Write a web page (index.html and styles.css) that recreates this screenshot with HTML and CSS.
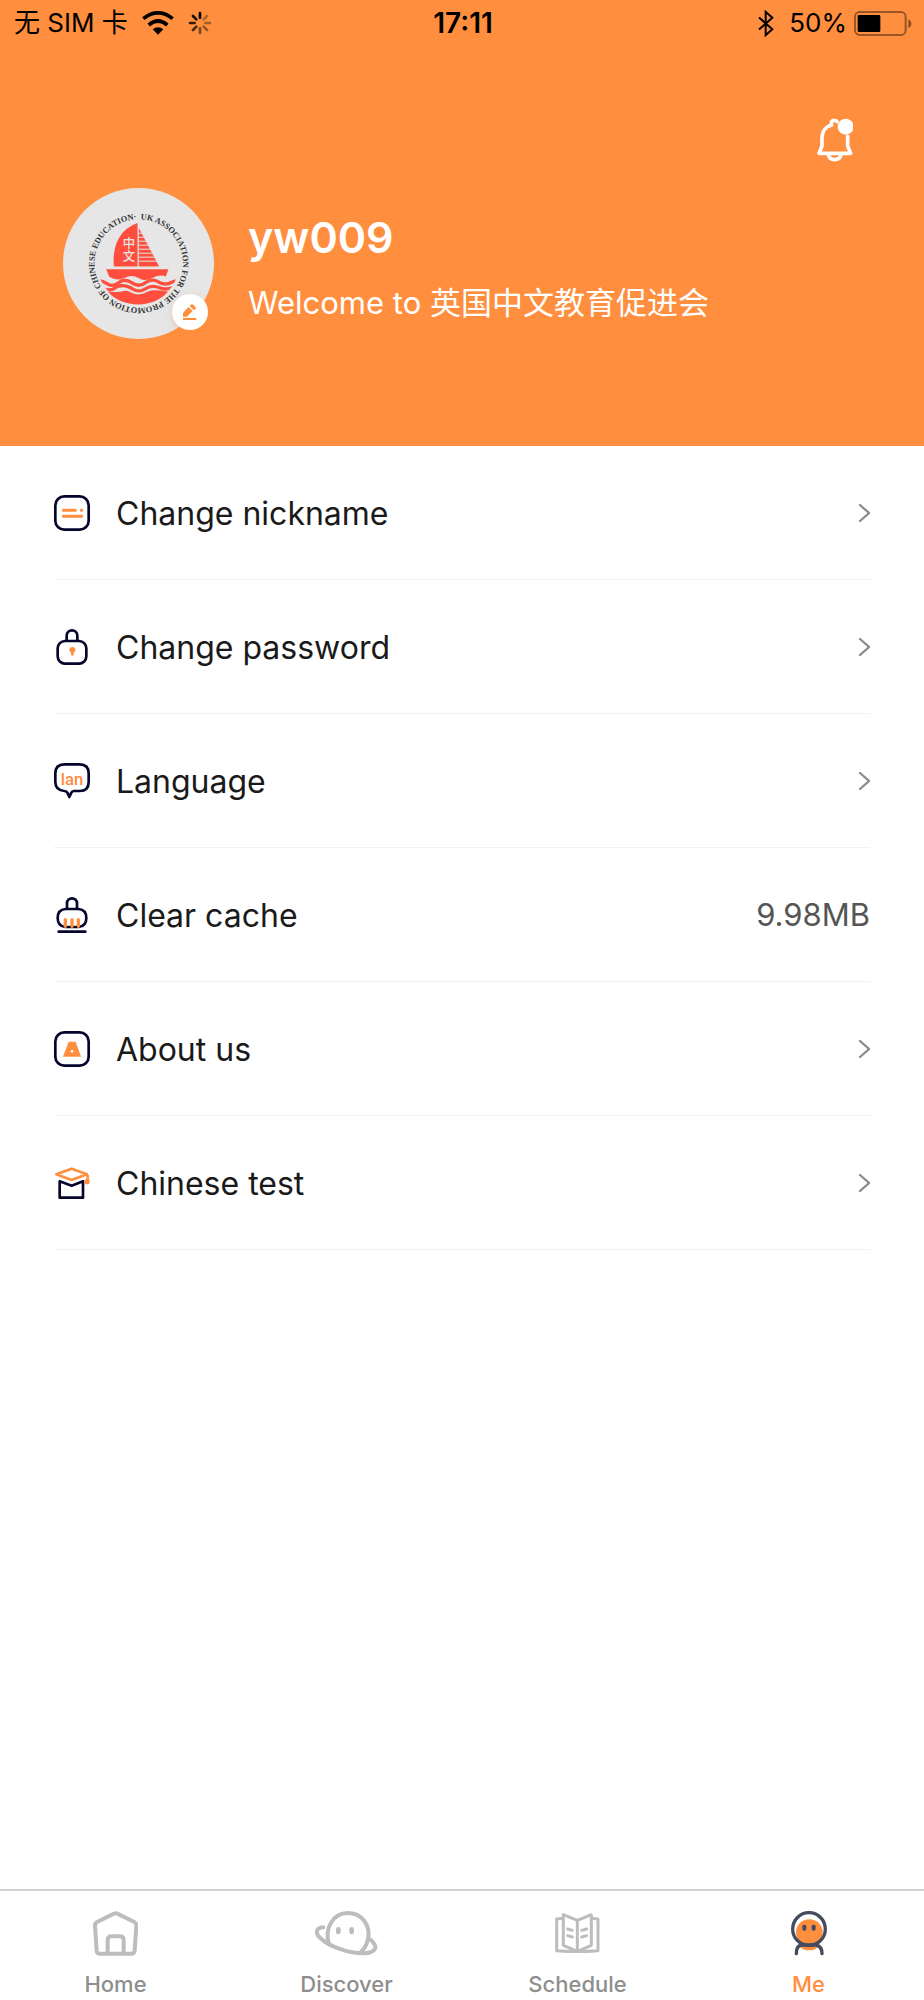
FILE: index.html
```html
<!DOCTYPE html>
<html lang="en">
<head>
    <meta charset="UTF-8">
    <meta name="viewport" content="width=device-width, initial-scale=1.0">
    <title>Me</title>
    <link rel="stylesheet" href="styles.css">
</head>
<body>

    <header class="header">
        <!-- Status bar -->
        <div class="status-bar">
            <div class="status-left">
                <span>无 SIM 卡</span>
                <svg class="wifi" viewBox="0 0 96 72">
                    <g fill="none" stroke="#000" stroke-width="11">
                        <path d="M4 23Q48-12 92 23"/>
                        <path d="M20 42Q48 18 76 42"/>
                    </g>
                    <path d="M32 55Q48 42 64 55L48 71Z"/>
                </svg>
                <svg class="spinner" viewBox="-36 -36 72 72">
                    <g stroke="#000" stroke-width="8" stroke-linecap="round">
                        <path d="M0-16V-30"/>
                        <path d="M11-11L21-21" opacity=".3"/>
                        <path d="M16 0H30" opacity=".35"/>
                        <path d="M11 11L21 21" opacity=".4"/>
                        <path d="M0 16V30" opacity=".5"/>
                        <path d="M-11 11L-21 21" opacity=".7"/>
                        <path d="M-16 0H-30" opacity=".8"/>
                        <path d="M-11-11L-21-21" opacity=".9"/>
                    </g>
                </svg>
            </div>
            <time class="clock">17:11</time>
            <div class="status-right">
                <svg class="bluetooth" viewBox="0 0 48 80">
                    <path d="M3 22L43 57L23 75V5L43 23L3 58" fill="none" stroke="#000" stroke-width="6"/>
                </svg>
                <span>50%</span>
                <svg class="battery" viewBox="0 0 174 75">
                    <rect x="3" y="3" width="152" height="69" rx="14" fill="none" stroke="#000" stroke-opacity=".4" stroke-width="6"/>
                    <rect x="11" y="12" width="68" height="51" rx="4"/>
                    <path d="M163 25Q172 29 172 38T163 51Z" opacity=".45"/>
                </svg>
            </div>
        </div>

        <div class="toolbar">
            <button class="bell" type="button" aria-label="Notifications">
                <svg viewBox="0 0 108 132">
                    <g fill="none" stroke="#fff" stroke-width="11" stroke-linecap="round" stroke-linejoin="round">
                        <path d="M92 55V84L101 106H6L15 84V62C15 40 27 25 44 21C41 12 45 6 52 7C57 7 59 9 60 11"/>
                        <path d="M34 110C38 130 68 130 72 110"/>
                    </g>
                    <circle cx="86" cy="26" r="24" fill="#fff"/>
                </svg>
            </button>
        </div>

        <!-- Profile -->
        <div class="profile">
            <div class="avatar">
                <svg class="avatar-img" viewBox="39 38 454 454">
                    <defs>
                        <path id="ring" d="M267 132A133 133 0 1 1 266 132"/>
                        <clipPath id="hull"><circle cx="265" cy="265" r="123"/></clipPath>
                    </defs>
                    <circle cx="266" cy="265" r="227" fill="#e6e6e6"/>
                    <text class="ring-text"><textPath href="#ring" startOffset="5">UK ASSOCIATION FOR THE PROMOTION OF CHINESE EDUCATION·</textPath></text>
                    <g fill="#ff4e3e">
                        <path d="M263 143V274H192C187 218 204 164 263 143Z"/>
                        <path d="M267 158L328 274H267Z"/>
                        <path d="M169 282H356L348 304Q330 296 309 308Q288 321 267 309Q246 297 225 308Q202 319 178 305Z"/>
                        <path d="M174 350Q192 351 213 350Q229 344 239 350Q265 366 293 350Q311 341 355 350Q320 388 265 388Q208 388 174 350Z"/>
                    </g>
                    <g fill="none" stroke="#ff4e3e" stroke-width="10" clip-path="url(#hull)">
                        <path d="M145 316Q162 319 174 327Q188 336 205 324Q224 308 244 322Q267 339 288 322Q309 308 329 322Q348 332 366 321L390 315"/>
                        <path d="M150 337Q169 347 188 343Q207 328 229 333Q241 336 249 342Q267 353 285 342Q307 328 329 338Q346 346 370 337"/>
                    </g>
                    <path d="M267 174H330M267 186H330M267 198H330M267 210H330M267 222H330M267 234H330M267 246H330M267 258H330" stroke="#e6e6e6" stroke-width="3"/>
                    <text class="sail-text" x="237" y="187">中文</text>
                </svg>
                <button class="edit" type="button" aria-label="Edit avatar">
                    <svg viewBox="0 0 42 48" fill="#ff8e3e">
                        <path d="M0 38V26L17 9L29 21L12 38Z"/>
                        <path d="M20 6L25 1Q27 0 29 1L38 10Q39 12 38 14L33 19Z"/>
                        <rect x="0" y="42" width="40" height="6"/>
                    </svg>
                </button>
            </div>
            <div class="profile-text">
                <h1>yw009</h1>
                <p>Welcome to 英国中文教育促进会</p>
            </div>
        </div>
    </header>

    <!-- Settings -->
    <main>
        <ul class="menu">
            <li>
                <button class="menu-item" type="button">
                    <svg class="icon" viewBox="0 0 108 108" fill="none" stroke-linecap="round">
                        <rect x="4" y="4" width="100" height="100" rx="27" stroke="#05052e" stroke-width="8"/>
                        <path d="M28 46H64M82 46H83M28 64H83" stroke="#ff8e3e" stroke-width="9"/>
                    </svg>
                    <span class="label">Change nickname</span>
                    <svg class="chevron" viewBox="0 0 33 54"><path d="M3 3L30 27L3 51"/></svg>
                </button>
            </li>
            <li>
                <button class="menu-item" type="button">
                    <svg class="icon" viewBox="0 0 108 108" fill="none">
                        <rect x="11" y="36" width="86" height="68" rx="22" stroke="#05052e" stroke-width="8"/>
                        <path d="M38 36V20C38-1 70-1 70 20V36" stroke="#05052e" stroke-width="8"/>
                        <path d="M51 71Q46 68 46 62Q47 54 55 54Q63 54 64 62Q64 68 59 71V78Q55 83 51 78Z" fill="#ff8e3e"/>
                    </svg>
                    <span class="label">Change password</span>
                    <svg class="chevron" viewBox="0 0 33 54"><path d="M3 3L30 27L3 51"/></svg>
                </button>
            </li>
            <li>
                <button class="menu-item" type="button">
                    <svg class="icon" viewBox="0 0 108 108" fill="none">
                        <path d="M31 4H77Q104 4 104 31V57Q104 84 77 84H60Q54 84 52 89L46 102L40 89Q38 84 31 84Q4 82 4 57V31Q4 4 31 4Z" stroke="#05052e" stroke-width="8" stroke-linejoin="round"/>
                        <text class="lan" x="54" y="65">lan</text>
                    </svg>
                    <span class="label">Language</span>
                    <svg class="chevron" viewBox="0 0 33 54"><path d="M3 3L30 27L3 51"/></svg>
                </button>
            </li>
            <li>
                <button class="menu-item" type="button">
                    <svg class="icon" viewBox="0 0 108 108" fill="none" stroke-linecap="round">
                        <path d="M39 36V19C39-1 69-1 69 19V36M34 36H74Q97 38 97 63Q97 88 74 90H34Q11 88 11 63Q11 38 34 36ZM14 104H94" stroke="#05052e" stroke-width="8"/>
                        <path d="M34 68V88M54 68V88M73 68V88" stroke="#ff8e3e" stroke-width="10"/>
                    </svg>
                    <span class="label">Clear cache</span>
                    <span class="value">9.98MB</span>
                </button>
            </li>
            <li>
                <button class="menu-item" type="button">
                    <svg class="icon" viewBox="0 0 108 108">
                        <rect x="4" y="4" width="100" height="100" rx="27" fill="none" stroke="#05052e" stroke-width="8"/>
                        <path d="M44 32H65L81 77H27Z" fill="#ff8e3e"/>
                        <circle cx="54" cy="61" r="4" fill="#fff"/>
                    </svg>
                    <span class="label">About us</span>
                    <svg class="chevron" viewBox="0 0 33 54"><path d="M3 3L30 27L3 51"/></svg>
                </button>
            </li>
            <li>
                <button class="menu-item" type="button">
                    <svg class="icon" viewBox="0 0 108 108" fill="none" stroke-linejoin="round">
                        <path d="M17 49V98H87V49L53 62Z" stroke="#05052e" stroke-width="8"/>
                        <path d="M7 28L53 11L99 28L53 45ZM101 30V48" stroke="#ff8e3e" stroke-width="8"/>
                        <circle cx="99" cy="50" r="8" fill="#ff8e3e"/>
                    </svg>
                    <span class="label">Chinese test</span>
                    <svg class="chevron" viewBox="0 0 33 54"><path d="M3 3L30 27L3 51"/></svg>
                </button>
            </li>
        </ul>
    </main>

    <!-- Tabs -->
    <nav class="tabs">
        <a class="tab" href="#home">
            <svg viewBox="0 0 136 135">
                <g fill="none" stroke="#bdbdbd" stroke-width="12" stroke-linejoin="round">
                    <path d="M63 8Q68 5 73 8L124 33Q130 37 130 44L125 119Q124 128 115 128H21Q12 128 11 119L6 44Q6 37 12 33Z"/>
                    <path d="M44 127V87Q44 76 55 76H81Q92 76 92 87V127"/>
                </g>
            </svg>
            <span>Home</span>
        </a>
        <a class="tab" href="#discover">
            <svg viewBox="0 0 188 135">
                <g fill="none" stroke="#bdbdbd" stroke-width="12" stroke-linecap="round">
                    <path d="M41 97C28 50 56 6 98 6C142 6 165 43 160 79C157 98 149 114 137 123"/>
                    <path d="M25 49C2 50 0 68 16 81C41 106 101 128 149 127C187 124 190 105 164 84"/>
                </g>
                <g fill="#bdbdbd">
                    <rect x="63" y="48" width="14" height="22" rx="7"/>
                    <rect x="103" y="48" width="14" height="22" rx="7"/>
                </g>
            </svg>
            <span>Discover</span>
        </a>
        <a class="tab" href="#schedule">
            <svg viewBox="0 0 134 135">
                <g fill="none" stroke="#bdbdbd" stroke-width="9" stroke-linejoin="round">
                    <path d="M26 22L5 24V119Q67 124 129 119V24L108 22"/>
                    <path d="M67 28L25 11V103L67 121L109 103V11L67 28V121"/>
                    <path d="M38 54L52 58M38 74L52 78M80 58L95 54M80 78L95 74" stroke-linecap="round"/>
                </g>
            </svg>
            <span>Schedule</span>
        </a>
        <a class="tab active" href="#me" aria-current="page">
            <svg viewBox="0 0 108 135">
                <path d="M24 104H84Q74 118 54 118T24 104Z" fill="#ff8e3e"/>
                <circle cx="54" cy="54" r="48" fill="#fff"/>
                <ellipse cx="55" cy="63" rx="40" ry="38" fill="#ff8e3e"/>
                <g fill="none" stroke="#454c5f" stroke-width="10">
                    <circle cx="54" cy="54" r="49"/>
                    <path d="M16 128Q16 102 34 102H75Q93 106 93 128" stroke-linecap="round"/>
                </g>
                <g fill="#454c5f">
                    <rect x="34" y="41" width="12" height="18" rx="5"/>
                    <rect x="62" y="41" width="12" height="18" rx="5"/>
                </g>
            </svg>
            <span>Me</span>
        </a>
    </nav>

</body>
</html>
```
FILE: styles.css
```css
* {
    margin: 0;
    padding: 0;
    box-sizing: border-box;
}
body {
    font-family: Inter, 'Noto Sans CJK SC', sans-serif;
    background: white;
    color: #1a1a1a;
    min-height: 100vh;
    display: flex;
    flex-direction: column;
}
button {
    background: none;
    border: none;
    font: inherit;
    color: inherit;
    cursor: pointer;
}
svg {
    display: block;
    flex-shrink: 0;
}

/* Header */
.header {
    background: #ff8e3e;
    color: white;
    padding-bottom: 107px;
}

/* Status bar */
.status-bar {
    display: grid;
    grid-template-columns: 1fr auto 1fr;
    align-items: center;
    height: 46px;
    padding: 0 12px 0 14px;
    color: #000;
    font-size: 26px;
    line-height: 32px;
}
.status-left,
.status-right {
    display: flex;
    align-items: center;
}
.status-left {
    gap: 14px;
}
.status-right {
    justify-content: flex-end;
    gap: 7px;
}
.clock {
    font-size: 28px;
    font-weight: 600;
}
.wifi {
    width: 32px;
    height: 24px;
}
.spinner {
    width: 24px;
    height: 24px;
}
.bluetooth {
    width: 16px;
    height: 27px;
    margin-right: 8px;
}
.battery {
    width: 58px;
    height: 25px;
}

.toolbar {
    display: flex;
    justify-content: flex-end;
    padding: 72px 71px 0 0;
}
.bell svg {
    width: 36px;
    height: 44px;
}

/* Profile */
.profile {
    display: flex;
    align-items: center;
    gap: 34px;
    padding: 0 63px;
    margin-top: 26px;
}
.avatar {
    position: relative;
}
.avatar-img {
    width: 151px;
    height: 151px;
}
.ring-text {
    font-family: 'Liberation Serif', serif;
    font-weight: bold;
    font-size: 25px;
    fill: #333;
}
.sail-text {
    font-family: 'Noto Sans CJK SC', sans-serif;
    font-weight: 500;
    font-size: 37px;
    writing-mode: vertical-rl;
    fill: #e6e6e6;
}
.edit {
    position: absolute;
    right: 6px;
    bottom: 9px;
    display: flex;
    justify-content: center;
    align-items: center;
    width: 36px;
    height: 36px;
    border-radius: 50%;
    background: white;
    box-shadow: 0 2px 6px rgba(255, 142, 62, 0.4);
}
.edit svg {
    width: 14px;
    height: 16px;
}
.profile-text {
    padding-top: 6px;
}
.profile-text h1 {
    font-size: 43px;
    line-height: 60px;
    font-weight: 600;
}
.profile-text p {
    font-size: 31px;
    line-height: 48px;
    font-weight: 400;
    margin-top: 12px;
}

/* Menu */
.menu {
    list-style: none;
    padding: 0 54px;
}
.menu li {
    border-bottom: 1px solid #f2f2f2;
}
.menu-item {
    display: flex;
    align-items: center;
    width: 100%;
    height: 133px;
    text-align: left;
    font-size: 32px;
}
.icon {
    width: 36px;
    height: 36px;
    margin-right: 26px;
}
.lan {
    font-family: Roboto, sans-serif;
    font-size: 50px;
    font-weight: 500;
    text-anchor: middle;
    fill: #ff8e3e;
}
.label {
    flex: 1;
    padding-top: 2px;
}
.value {
    color: #555;
    font-size: 31px;
}
.chevron {
    width: 11px;
    height: 18px;
    fill: none;
    stroke: #8c8c8c;
    stroke-width: 7;
    stroke-linecap: round;
}

/* Tabs */
.tabs {
    display: grid;
    grid-template-columns: repeat(4, 1fr);
    margin-top: auto;
    border-top: 2px solid #d2d2d2;
    padding: 20px 0 3px;
}
.tab {
    display: flex;
    flex-direction: column;
    align-items: center;
    gap: 15px;
    color: #8e8e8e;
    font-size: 22px;
    line-height: 26px;
    font-weight: 500;
    text-decoration: none;
}
.tab svg {
    height: 45px;
}
.tab.active {
    color: #ff8e3e;
}
```
